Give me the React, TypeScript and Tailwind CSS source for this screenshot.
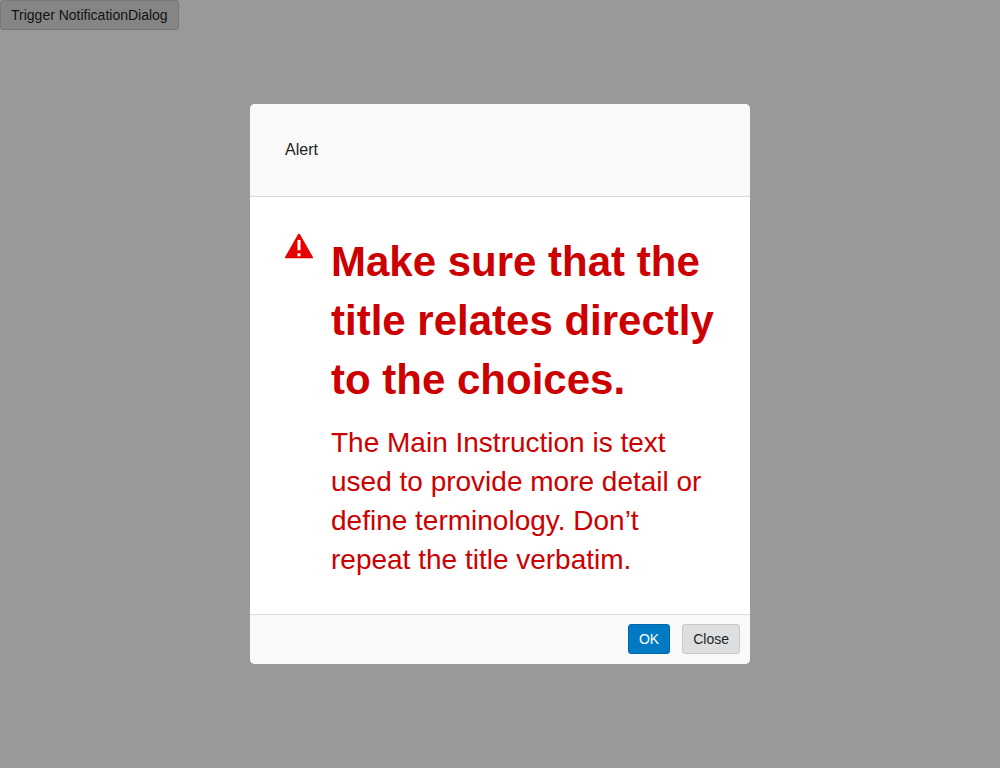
export default function App() {
  return (
    <div className="min-h-screen bg-white font-['Liberation_Sans',Arial,sans-serif] text-sm text-[#232323]">
      <button type="button" className="block h-[30px] rounded-[3px] border border-[#c8c8c8] bg-[#dedede] px-2.5 text-sm leading-5">
        Trigger NotificationDialog
      </button>
      <div className="fixed inset-0 flex items-center justify-center bg-black/40">
        <section role="alertdialog" aria-modal="true" aria-labelledby="dialog-label" className="w-full max-w-[500px] overflow-hidden rounded-[5px] bg-white">
          <header className="border-b border-[#d9d9d9] bg-[#f9f9f9] px-[35px] py-[34px]">
            <h2 id="dialog-label" className="text-base leading-6">Alert</h2>
          </header>
          <div className="flex gap-[18px] px-[35px] py-[35px] text-[#cc0000]">
            <svg aria-hidden="true" viewBox="0 0 28 28" className="h-7 w-7 shrink-0">
              <path fill="#e60000" d="M12.900 2.600Q14 1 15.100 2.600L28 25.200V26.300H0V25.200z" />
              <path fill="#fff" d="M12.500 8h3v10.300h-3zM12.500 21.200h3v3h-3z" />
            </svg>
            <div>
              <h3 className="text-[42px] leading-[59px] font-bold">Make sure that the title relates directly to the choices.</h3>
              <p className="mt-3.5 text-[28px] leading-[39px]">
                The Main Instruction is text used to provide more detail or define terminology. Don’t repeat the title verbatim.
              </p>
            </div>
          </div>
          <footer className="flex justify-end gap-3 border-t border-[#d9d9d9] bg-[#f9f9f9] px-2.5 pt-[9px] pb-2.5">
            <button type="button" className="h-[30px] rounded-[3px] border border-[#0067ab] bg-[#007ac3] px-2.5 text-sm leading-5 text-white">OK</button>
            <button type="button" className="h-[30px] rounded-[3px] border border-[#c8c8c8] bg-[#dcdee0] px-2.5 text-sm leading-5">Close</button>
          </footer>
        </section>
      </div>
    </div>
  );
}
